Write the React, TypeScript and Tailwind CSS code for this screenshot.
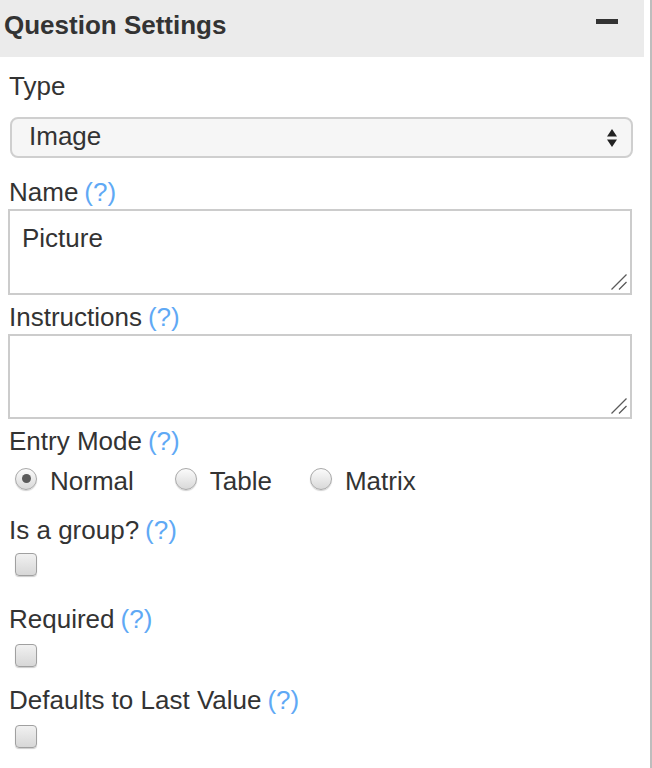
import React from 'react';

const Help = () => <span className="text-[#5fa9f5] ml-[6px]">(?)</span>;

function Label({ text, help = true, className = '' }: { text: string; help?: boolean; className?: string }) {
  return (
    <div className={`h-[30px] leading-[30px] text-[26px] pl-[1px] whitespace-nowrap ${className}`}>
      {text}
      {help && <Help />}
    </div>
  );
}

function Grip() {
  return (
    <svg className="absolute right-[3px] bottom-[3px] w-[16px] h-[16px]" viewBox="0 0 16 16">
      <path d="M15.5 0.5 L0.5 15.5 M15.5 8 L8 15.5" stroke="#5a5a5a" strokeWidth="1.3" fill="none" />
    </svg>
  );
}

function TextArea({ value, className = '' }: { value?: string; className?: string }) {
  return (
    <div className={`relative w-[624px] border-2 border-[#cccccc] bg-white ${className}`}>
      {value && <div className="pl-[12px] pt-[12px] text-[26px] leading-[30px]">{value}</div>}
      <Grip />
    </div>
  );
}

function Radio({ checked = false }: { checked?: boolean }) {
  return (
    <span className="w-[22px] h-[22px] rounded-full border border-[#a9a9a9] bg-gradient-to-b from-[#fbfbfb] to-[#d9d9d9] shadow-[0_1px_1px_rgba(0,0,0,0.18)] flex items-center justify-center shrink-0">
      {checked && <span className="w-[9px] h-[9px] rounded-full bg-[#5a5a5a]" />}
    </span>
  );
}

function Checkbox({ className = '' }: { className?: string }) {
  return (
    <div
      className={`ml-[7px] w-[22px] h-[23px] rounded-[4px] border border-[#a0a0a0] bg-gradient-to-b from-[#f1f1f1] to-[#d7d7d7] shadow-[0_1px_1px_rgba(0,0,0,0.2)] ${className}`}
    />
  );
}

export default function App() {
  return (
    <div className="w-[652px] h-[768px] bg-white flex font-['Liberation_Sans',Arial,sans-serif] text-[#333333] overflow-hidden">
      <div className="w-[644px]">
        {/* Panel header */}
        <div className="h-[57px] bg-[#ebebeb] flex justify-between pl-[4px] pt-[10px]">
          <h2 className="text-[26px] leading-[30px] font-bold">Question Settings</h2>
          <div className="mt-[9px] mr-[26px] w-[22px] h-[5px] bg-[#333333]" />
        </div>

        <div className="pl-[8px]">
          <Label text="Type" help={false} className="mt-[14px]" />
          <div className="mt-[16px] ml-[2px] w-[623px] h-[41px] rounded-[8px] border-2 border-[#cfcfcf] bg-[#f6f6f6] flex items-center justify-between pl-[17px] pr-[14px]">
            <span className="text-[26px] leading-[30px] -mt-[4px]">Image</span>
            <svg className="w-[10px] h-[18px]" viewBox="0 0 10 18">
              <path d="M5 0 L10 7.5 L0 7.5 Z M0 10.5 L10 10.5 L5 18 Z" fill="#222" />
            </svg>
          </div>

          <Label text="Name" className="mt-[19px]" />
          <TextArea value="Picture" className="mt-[2px] h-[86px]" />

          <Label text="Instructions" className="mt-[7px]" />
          <TextArea className="mt-[2px] h-[85px]" />

          <Label text="Entry Mode" className="mt-[7px]" />
          <div className="mt-[11px] h-[23px] flex items-center text-[26px] leading-[30px] pl-[7px]">
            <Radio checked />
            <span className="ml-[13px] mt-[4px]">Normal</span>
            <span className="ml-[41px]"><Radio /></span>
            <span className="ml-[13px] mt-[4px]">Table</span>
            <span className="ml-[38px]"><Radio /></span>
            <span className="ml-[13px] mt-[4px]">Matrix</span>
          </div>

          <Label text="Is a group?" className="mt-[25px]" />
          <Checkbox className="mt-[8px]" />

          <Label text="Required" className="mt-[28px]" />
          <Checkbox className="mt-[10px]" />

          <Label text="Defaults to Last Value" className="mt-[18px]" />
          <Checkbox className="mt-[10px]" />
        </div>
      </div>
      <div className="w-[6px]" />
      <div className="w-[2px] bg-[#bdbdbd]" />
    </div>
  );
}
